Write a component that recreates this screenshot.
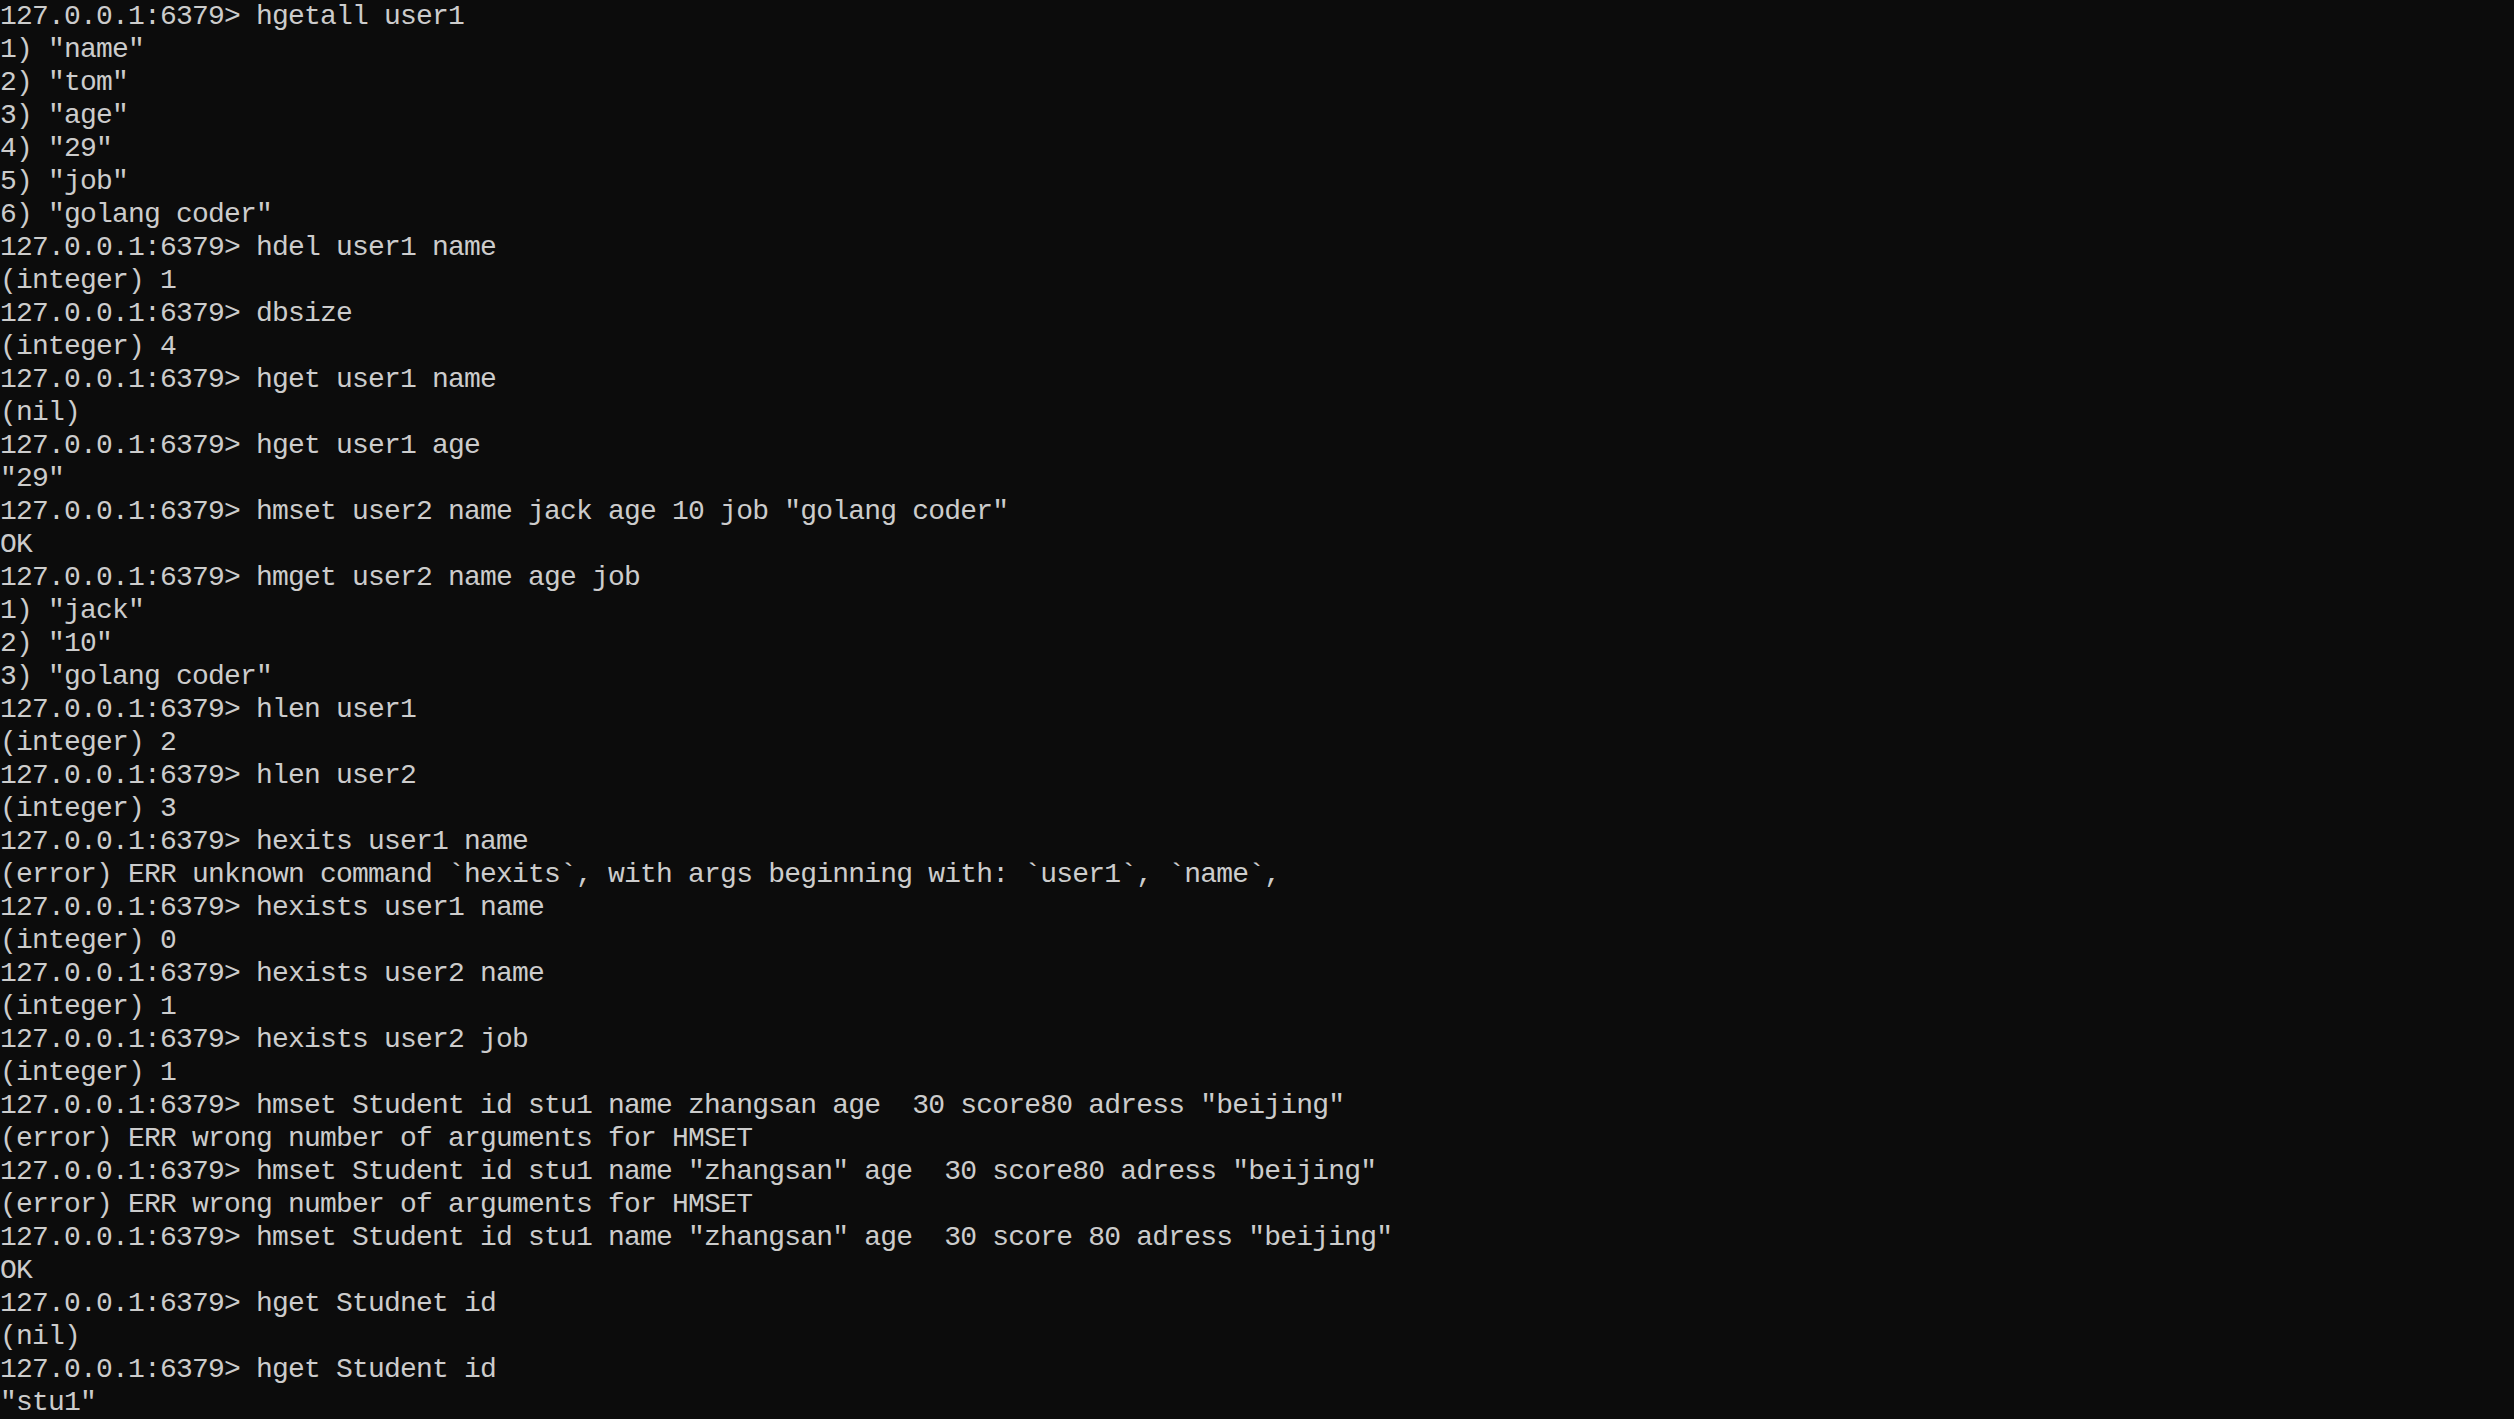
const P = "127.0.0.1:6379> ";

const lines: string[] = [
  P + "hgetall user1",
  '1) "name"',
  '2) "tom"',
  '3) "age"',
  '4) "29"',
  '5) "job"',
  '6) "golang coder"',
  P + "hdel user1 name",
  "(integer) 1",
  P + "dbsize",
  "(integer) 4",
  P + "hget user1 name",
  "(nil)",
  P + "hget user1 age",
  '"29"',
  P + 'hmset user2 name jack age 10 job "golang coder"',
  "OK",
  P + "hmget user2 name age job",
  '1) "jack"',
  '2) "10"',
  '3) "golang coder"',
  P + "hlen user1",
  "(integer) 2",
  P + "hlen user2",
  "(integer) 3",
  P + "hexits user1 name",
  "(error) ERR unknown command `hexits`, with args beginning with: `user1`, `name`,",
  P + "hexists user1 name",
  "(integer) 0",
  P + "hexists user2 name",
  "(integer) 1",
  P + "hexists user2 job",
  "(integer) 1",
  P + 'hmset Student id stu1 name zhangsan age  30 score80 adress "beijing"',
  "(error) ERR wrong number of arguments for HMSET",
  P + 'hmset Student id stu1 name "zhangsan" age  30 score80 adress "beijing"',
  "(error) ERR wrong number of arguments for HMSET",
  P + 'hmset Student id stu1 name "zhangsan" age  30 score 80 adress "beijing"',
  "OK",
  P + "hget Studnet id",
  "(nil)",
  P + "hget Student id",
  '"stu1"',
];

export default function App() {
  return (
    <div className="w-full h-[1419px] overflow-hidden bg-[#0c0c0c] text-[#cccccc] font-['Liberation_Mono',monospace] text-[28px] tracking-[-0.8px] leading-[33px]">
      {lines.map((l, i) => (
        <div key={i} className="whitespace-pre h-[33px]">
          {l}
        </div>
      ))}
    </div>
  );
}
